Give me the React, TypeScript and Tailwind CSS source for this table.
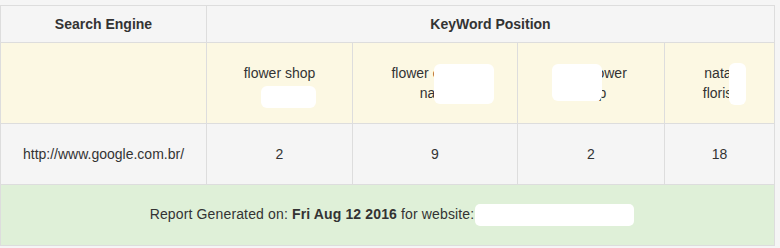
const KEYWORDS = [
  { lines: ['flower shop', 'natal'], mask: 'left-[54px] top-[43px] w-[55px] h-[22px]' },
  { lines: ['flower centers', 'natal'], mask: 'left-[81px] top-[21px] w-[60px] h-[40px]' },
  { lines: ['natal flower', 'shop'], mask: 'left-[34px] top-[21px] w-[50px] h-[37px]' },
  { lines: ['natal', 'florist'], mask: 'left-[64px] top-[20px] w-[17px] h-[42px]' },
];

const POSITIONS = [2, 9, 2, 18];

export default function App() {
  return (
    <div className="min-h-[248px] bg-[#f5f5f5] pt-[5px] text-[14px] leading-[20px] text-[#333]" style={{ fontFamily: '"Liberation Sans", Arial, sans-serif' }}>
      <table className="w-[774px] table-fixed border-collapse border border-[#ddd]">
        <colgroup>
          <col className="w-[206px]" />
          <col className="w-[146px]" />
          <col className="w-[165px]" />
          <col className="w-[147px]" />
          <col className="w-[110px]" />
        </colgroup>
        <tbody>
          <tr className="bg-[#f5f5f5]">
            <th className="h-[37px] border border-[#ddd] p-0 text-center font-bold">Search Engine</th>
            <th colSpan={4} className="border border-[#ddd] p-0 text-center font-bold">KeyWord Position</th>
          </tr>
          <tr className="bg-[#fcf8e3]">
            <td className="h-[81px] border border-[#ddd] p-0"></td>
            {KEYWORDS.map((k, i) => (
              <td key={i} className="relative border border-[#ddd] p-0 text-center align-middle">
                {k.lines[0]}
                <br />
                {k.lines[1]}
                <span className={`absolute rounded-[6px] bg-white ${k.mask}`} />
              </td>
            ))}
          </tr>
          <tr className="bg-[#f5f5f5]">
            <td className="h-[61px] border border-[#ddd] p-0 text-center">http://www.google.com.br/</td>
            {POSITIONS.map((p, i) => (
              <td key={i} className="border border-[#ddd] p-0 text-center">{p}</td>
            ))}
          </tr>
          <tr className="bg-[#dff0d8]">
            <td colSpan={5} className="h-[61px] border border-[#ddd] p-0 text-center tracking-[0.14px]">
              Report Generated on: <b>Fri Aug 12 2016</b> for website:
              <span className="ml-px mr-[-9px] inline-block h-[22px] w-[159px] rounded-[5px] bg-white align-middle" />
            </td>
          </tr>
        </tbody>
      </table>
    </div>
  );
}
